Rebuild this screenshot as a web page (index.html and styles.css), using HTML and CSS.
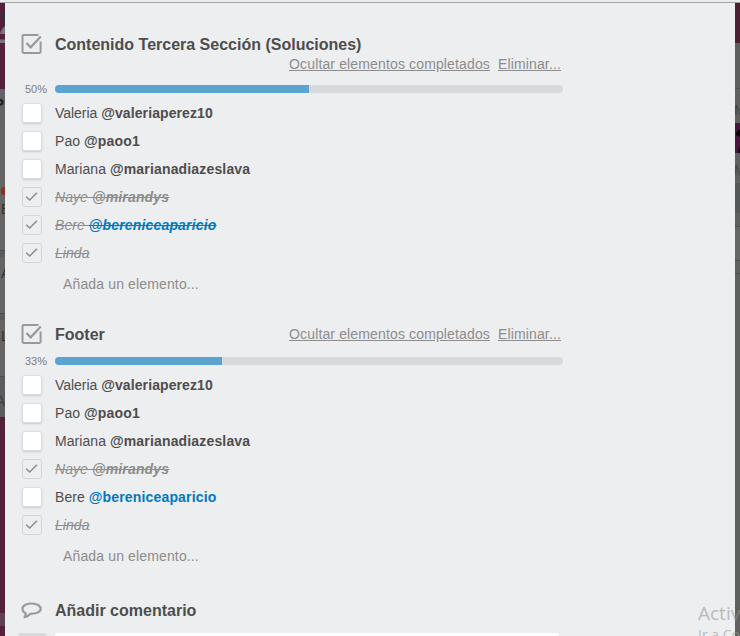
FILE: index.html
```html
<!DOCTYPE html>
<html lang="es">
<head>
<meta charset="utf-8">
<title>Tarjeta</title>
<link rel="stylesheet" href="styles.css">
</head>
<body>
<svg class="defs" aria-hidden="true">
  <symbol id="checklist" viewBox="0 0 22 22">
    <path d="M17.500 2H2.600Q1.500 2 1.500 3.100V18.800Q1.500 19.900 2.600 19.900H18.500Q19.600 19.900 19.600 18.800V8.500" fill="none" stroke="#999" stroke-width="2"/>
    <path d="M5.500 10L9.700 14.300L19.800 3.600" fill="none" stroke="#999" stroke-width="2.200"/>
  </symbol>
  <symbol id="tick" viewBox="0 0 20 20">
    <path d="M4.200 9.700L7.700 13L15 5.800" fill="none" stroke="#8c8c8c" stroke-width="1.500"/>
  </symbol>
</svg>
<div class="topbar"></div>
<div class="window">
  <div class="board left">
    <div class="l-head"><svg width="5" height="40" viewBox="0 0 5 40"><path d="M5 5Q1 12 4 21L5 23Z" fill="#26343b"/><path d="M5 23Q1 26 0 31H5Z" fill="#77757a"/><path d="M0 36.500H5V40H0Z" fill="#77757a"/></svg></div>
    <div class="l-tab"><b>P</b></div>
    <div class="l-card tall"><i></i><span>E</span></div>
    <div class="l-gap"></div>
    <div class="l-card second"><span>A</span></div>
    <div class="l-gap"></div>
    <div class="l-card third"><span>L</span></div>
    <div class="l-add"><span>A</span></div>
    <div class="l-band"></div>
  </div>
  <main class="panel">
    <section class="checklist first">
      <header>
        <svg class="icon"><use href="#checklist"/></svg>
        <h3>Contenido Tercera Sección (Soluciones)</h3>
        <nav><a>Ocultar elementos completados</a><a>Eliminar...</a></nav>
      </header>
      <div class="progress"><span>50%</span><div class="bar"><div class="fill" style="width:50%"></div></div></div>
      <ul>
        <li><span class="box"></span><p>Valeria <b>@valeriaperez10</b></p></li>
        <li><span class="box"></span><p>Pao <b>@paoo1</b></p></li>
        <li><span class="box"></span><p>Mariana <b>@marianadiazeslava</b></p></li>
        <li class="done"><span class="box"><svg><use href="#tick"/></svg></span><p>Naye <b>@mirandys</b></p></li>
        <li class="done"><span class="box"><svg><use href="#tick"/></svg></span><p>Bere <b class="me">@bereniceaparicio</b></p></li>
        <li class="done"><span class="box"><svg><use href="#tick"/></svg></span><p>Linda</p></li>
      </ul>
      <div class="add">Añada un elemento...</div>
    </section>
    <section class="checklist">
      <header>
        <svg class="icon"><use href="#checklist"/></svg>
        <h3>Footer</h3>
        <nav><a>Ocultar elementos completados</a><a>Eliminar...</a></nav>
      </header>
      <div class="progress"><span>33%</span><div class="bar"><div class="fill" style="width:32.9%"></div></div></div>
      <ul>
        <li><span class="box"></span><p>Valeria <b>@valeriaperez10</b></p></li>
        <li><span class="box"></span><p>Pao <b>@paoo1</b></p></li>
        <li><span class="box"></span><p>Mariana <b>@marianadiazeslava</b></p></li>
        <li class="done"><span class="box"><svg><use href="#tick"/></svg></span><p>Naye <b>@mirandys</b></p></li>
        <li><span class="box"></span><p>Bere <b class="me">@bereniceaparicio</b></p></li>
        <li class="done"><span class="box"><svg><use href="#tick"/></svg></span><p>Linda</p></li>
      </ul>
      <div class="add">Añada un elemento...</div>
    </section>
    <section class="comment">
      <header>
        <svg class="icon bubble" viewBox="0 0 22 18"><path d="M4.600 11.300C.6 9.300 .2 4.800 4.500 2.700C8 1.300 13 1.300 16.500 2.700C20.800 4.800 20.800 8.800 16.500 10.600C14.500 11.500 12 11.700 9.500 11.700C7.800 13.600 6 14.700 3.500 15.200Q5 13.200 4.600 11.300Z" fill="none" stroke="#999" stroke-width="2.100" stroke-linejoin="round"/></svg>
        <h3>Añadir comentario</h3>
      </header>
      <div class="compose"><div class="avatar"></div><div class="field"></div></div>
    </section>
  </main>
  <div class="board right">
    <div class="r-head"></div>
    <div class="r-a"></div>
    <div class="r-name">M</div>
    <div class="r-photo"><svg width="5" height="30"><path d="M5 6Q1 8 1 12L5 14Z" fill="#080408"/><path d="M5 22L3 30H5Z" fill="#080408"/></svg></div>
    <div class="r-name low">M</div>
    <div class="r-b"></div>
    <div class="r-c"></div>
    <div class="r-d"></div>
    <div class="r-e"></div>
  </div>
</div>
<div class="watermark"><div>Activar Windows</div><small>Ir a Configuración</small></div>
</body>
</html>
```
FILE: styles.css
```css
* { box-sizing: border-box; }
body { margin: 0; width: 740px; height: 636px; overflow: hidden; position: relative; background: #edeef0; color: #4d4d4d; font: 14px/18px "Liberation Sans", Arial, sans-serif; }
.defs { display: none; }
.topbar { height: 3px; background: #eaebeb; border-bottom: 1px solid #a3a3a3; }
.window { display: flex; height: 633px; }
.board { flex: 0 0 5px; overflow: hidden; display: flex; flex-direction: column; }
.board > div { flex: none; overflow: hidden; }
.left { background: #54203a; }
.left span { display: block; width: 14px; font-size: 14px; color: #303030; }
.l-head { height: 86px; background: #54203a; }
.l-head svg { display: block; }
.l-tab { height: 34px; background: #626466; padding-top: 6px; }
.l-tab b { display: block; margin-left: -6px; font-size: 15px; color: #202020; }
.l-card { background: #656565; border-bottom: 1px solid #4d4e50; }
.tall { height: 128px; padding-top: 64px; }
.tall i { display: block; width: 12px; height: 8px; margin-left: 1px; border-radius: 3px; background: #8d3023; }
.tall span { margin: 5px 0 0 1px; }
.l-gap { height: 6px; background: #5a5d60; }
.second { height: 57px; padding-top: 7px; }
.second span { margin-left: 1px; }
.third { height: 57px; padding-top: 7px; }
.third span { margin-left: 1px; }
.l-add { height: 40px; background: #5a5c5e; padding-top: 15px; }
.l-add span { margin-left: -4px; color: #414243; }
.l-band { height: 13px; margin-top: 196px; background: #5e4152; }

.panel { flex: 0 0 730px; padding: 30px 0 0 16px; overflow: hidden; background: #edeef0; }
.checklist, .comment { width: 542px; }
header { display: flex; align-items: flex-start; align-content: flex-start; height: 30px; }
.first header { flex-wrap: wrap; height: 48px; }
.icon { flex: none; width: 22px; height: 22px; margin-right: 12px; }
h3 { margin: 1px 0 0; font-size: 16px; line-height: 22px; font-weight: bold; }
nav { display: flex; gap: 8px; margin: 2px 2px 0 auto; color: #8c8c8c; letter-spacing: .14px; }
.first h3 { width: 500px; }
.first nav { margin-top: -1px; }
nav a { text-decoration: underline; }
.progress { display: flex; align-items: center; height: 16px; }
.progress span { width: 34px; padding-left: 4px; font-size: 11px; color: #808080; }
.bar { flex: 1; height: 8px; border-radius: 4px; overflow: hidden; background: #d6dadc; }
.fill { height: 8px; background: #5ba4cf; }
ul { list-style: none; margin: 2px 0 0; padding: 0; }
li { display: flex; align-items: center; height: 28px; }
li p { margin: 0; letter-spacing: .06px; }
li b { letter-spacing: .16px; }
li:first-child p { letter-spacing: -.03px; }
li:first-child b { letter-spacing: .1px; }
.box { flex: none; width: 20px; height: 20px; margin: 0 13px 0 1px; border: 1px solid #dcdfe1; border-radius: 3px; background: #fff; box-shadow: 0 1px 2px #c4c9cc; }
.box svg { display: block; width: 20px; height: 20px; margin: -1px; }
.done .box { background: #edeef0; border-color: #d3d7d9; box-shadow: none; }
.done p { color: #8c8c8c; font-style: italic; text-decoration: line-through; }
.me { color: #0079bf; text-decoration: inherit; }
.add { height: 54px; padding: 8px 0 0 42px; color: #8c8c8c; letter-spacing: .14px; }
.checklist + .checklist { height: 272px; padding-top: 0; }
.first { height: 290px; }
.comment { padding-top: 4px; }
.comment header { height: 34px; }
.bubble { height: 18px; margin-top: 3px; }
.compose { display: flex; gap: 8px; margin-left: -3px; }
.avatar { width: 29px; height: 30px; border-radius: 3px; background: #d6dadc; }
.field { width: 504px; height: 30px; border-radius: 3px; background: #fff; }

.right { background: #5e6160; }
.r-head { height: 40px; background: #4b2032; }
.r-a { height: 46px; background: #5d605f; border-bottom: 1px solid #505352; }
.r-name { height: 34px; padding-top: 12px; font-size: 14px; color: #434645; }
.right .r-name { text-indent: -1px; }
.r-photo { height: 30px; background: #47163d; }
.r-photo svg { display: block; }
.right .low { height: 30px; padding-top: 8px; }
.r-b { height: 30px; background: #555858; }
.r-c { height: 14px; background: #5d605f; border-bottom: 1px solid #4e5150; }
.r-d { height: 34px; background: #656666; border-bottom: 1px solid #4a4d4c; }
.r-e { height: 13px; border-bottom: 1px solid #4e5150; }

.watermark { position: absolute; left: 698px; top: 601px; width: 42px; height: 35px; overflow: hidden; white-space: nowrap; color: rgba(150, 151, 152, .62); font-family: "Open Sans", sans-serif; font-size: 19px; line-height: 24px; }
.watermark small { display: block; font-size: 14px; line-height: 20px; }
```
